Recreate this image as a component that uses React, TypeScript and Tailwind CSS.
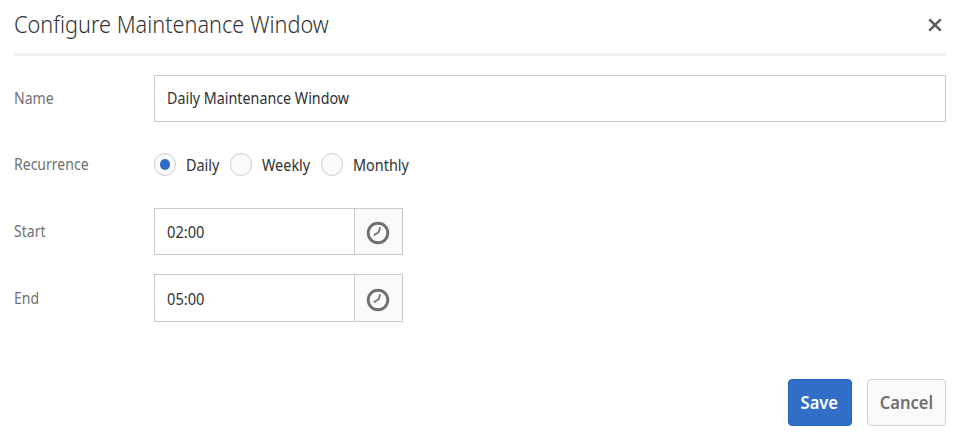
import React from "react";

function Label({ children }: { children: React.ReactNode }) {
  return (
    <div className="mb-px w-[140px] shrink-0 text-[15.5px] leading-5 text-[#707070]">
      <span className="inline-block origin-left scale-x-[0.905]">{children}</span>
    </div>
  );
}

function Radio({ label, checked, width }: { label: string; checked?: boolean; width: string }) {
  return (
    <label className={`flex items-center ${width}`}>
      <span className="flex h-[23px] w-[22px] shrink-0 items-center justify-center rounded-full border border-[#cfcfcf] bg-[#fafafa]">
        {checked && <span className="h-[11px] w-[10px] rounded-full bg-[#326ec8]" />}
      </span>
      <span className="ml-2.5 inline-block origin-left scale-x-[0.93] text-[15.5px] leading-5">{label}</span>
    </label>
  );
}

function Clock() {
  return (
    <svg className="mr-px h-6 w-6" viewBox="0 0 24 24" fill="none" stroke="#707070">
      <circle cx="12" cy="12" r="9.8" strokeWidth="2.9" />
      <path d="M14 6.3L13 10.4Q12.7 11.3 11.9 11.8L7.8 14.2" strokeWidth="1.8" />
    </svg>
  );
}

function TimeField({ value, height, inset }: { value: string; height: string; inset: string }) {
  return (
    <div className={`flex w-[249px] border border-[#cacaca] ${height}`}>
      <div className={`flex flex-1 items-center pl-3 text-[15.5px] leading-5 ${inset}`}>
        <span className="inline-block origin-left scale-x-[0.945]">{value}</span>
      </div>
      <div className="flex w-[48px] items-center justify-center border-l border-[#cacaca] bg-[#fafafa] pt-[3px]">
        <Clock />
      </div>
    </div>
  );
}

export default function App() {
  return (
    <main className="h-[437px] w-[964px] bg-white px-3.5 pr-[18px] font-['Noto_Sans',sans-serif] text-[#323232]">
      <header className="flex h-14 items-start justify-between border-b-[3px] border-[#f1f1f1]">
        <h1 className="mt-2 text-[24px] leading-8 font-light whitespace-nowrap">
          <span className="inline-block origin-left scale-x-[0.904]">Configure Maintenance Window</span>
        </h1>
        <svg className="mt-[17px] mr-1 h-4 w-[14px]" viewBox="0 0 14 16" stroke="#5c5c5c" strokeWidth="2.5">
          <path d="M1.3 2.3L12.7 13.7M12.7 2.3L1.3 13.7" />
        </svg>
      </header>
      <div className="mt-[19px] flex h-[47px] items-center">
        <Label>Name</Label>
        <div className="flex h-[47px] flex-1 items-center border border-[#cacaca] pl-3 text-[15.5px]">
          <span className="inline-block origin-left scale-x-[0.922]">Daily Maintenance Window</span>
        </div>
      </div>
      <div className="mt-[30px] flex h-[25px] items-center">
        <Label>Recurrence</Label>
        <div className="flex">
          <Radio label="Daily" checked width="w-[76px]" />
          <Radio label="Weekly" width="w-[91px]" />
          <Radio label="Monthly" width="w-[90px]" />
        </div>
      </div>
      <div className="mt-[31px] flex h-[47px] items-center">
        <Label>Start</Label>
        <TimeField value="02:00" height="h-[47px]" inset="pt-0" />
      </div>
      <div className="mt-[19px] flex h-12 items-center">
        <Label>End</Label>
        <TimeField value="05:00" height="h-12" inset="pt-0.5" />
      </div>
      <footer className="mt-[57px] flex justify-end gap-[15px] text-[17px] font-semibold">
        <button className="flex h-[47px] w-16 items-center justify-center rounded-[4px] border border-[#2361bd] bg-[#326ec8] text-white">
          <span className="mr-px inline-block scale-x-[0.97]">Save</span>
        </button>
        <button className="flex h-[47px] w-[79px] items-center justify-center rounded-[4px] border border-[#cfcfcf] bg-[#fafafa] text-[#707070]">
          <span className="mr-px inline-block scale-x-[0.97]">Cancel</span>
        </button>
      </footer>
    </main>
  );
}
